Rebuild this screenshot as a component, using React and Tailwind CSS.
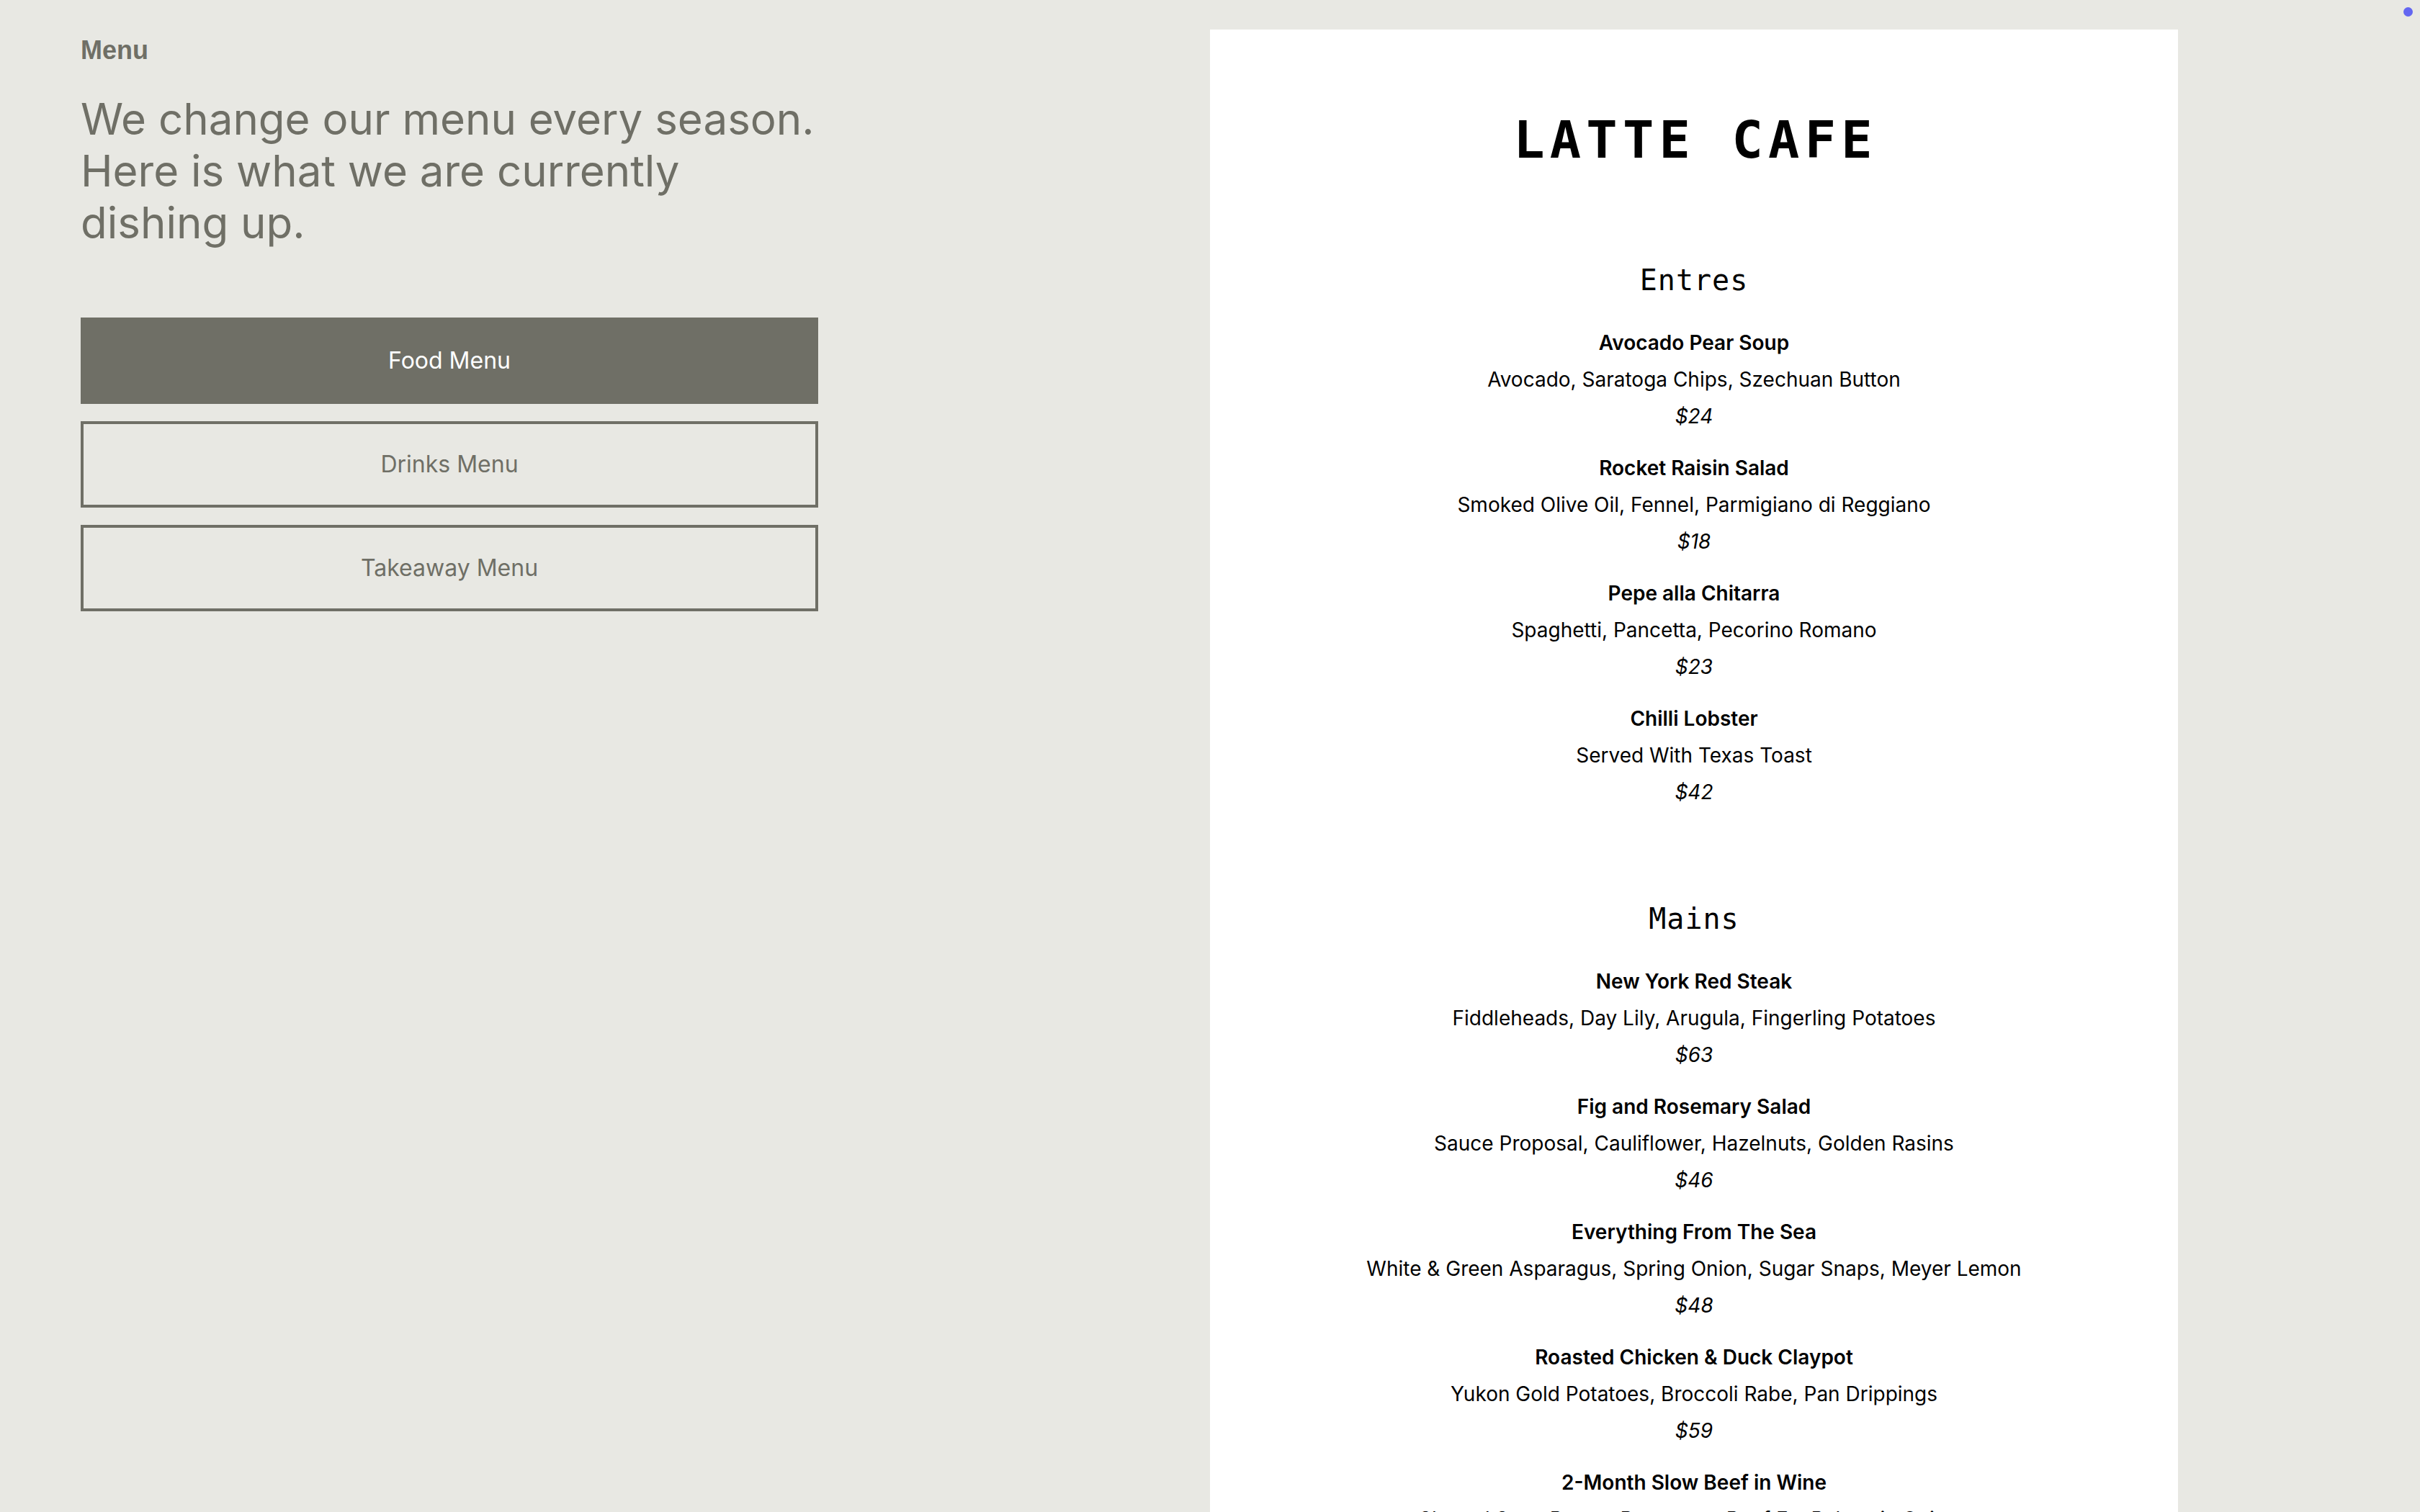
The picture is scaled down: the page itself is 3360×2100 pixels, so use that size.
import React from "react";

const sections = [
  {
    title: "Entres",
    items: [
      { name: "Avocado Pear Soup", desc: "Avocado, Saratoga Chips, Szechuan Button", price: "$24" },
      { name: "Rocket Raisin Salad", desc: "Smoked Olive Oil, Fennel, Parmigiano di Reggiano", price: "$18" },
      { name: "Pepe alla Chitarra", desc: "Spaghetti, Pancetta, Pecorino Romano", price: "$23" },
      { name: "Chilli Lobster", desc: "Served With Texas Toast", price: "$42" },
    ],
  },
  {
    title: "Mains",
    items: [
      { name: "New York Red Steak", desc: "Fiddleheads, Day Lily, Arugula, Fingerling Potatoes", price: "$63" },
      { name: "Fig and Rosemary Salad", desc: "Sauce Proposal, Cauliflower, Hazelnuts, Golden Rasins", price: "$46" },
      { name: "Everything From The Sea", desc: "White & Green Asparagus, Spring Onion, Sugar Snaps, Meyer Lemon", price: "$48" },
      { name: "Roasted Chicken & Duck Claypot", desc: "Yukon Gold Potatoes, Broccoli Rabe, Pan Drippings", price: "$59" },
      { name: "2-Month Slow Beef in Wine", desc: "Shaved Snap Beans, Rosemary, Beef Fat Balsamic Onions", price: "$52" },
    ],
  },
];

export default function App() {
  return (
    <div className="relative min-h-screen w-full bg-[#e8e8e3] font-['Inter',sans-serif]">
      <div className="absolute right-[10px] top-[10px] h-[13px] w-[13px] rounded-full bg-[#6366f1]" />
      <div className="grid grid-cols-2">
        {/* Left column */}
        <div className="pl-[112px] pt-[46px]">
          <div className="w-[1024px]">
            <h2 className="font-['Liberation_Sans',Arial,sans-serif] text-[36px] font-bold leading-[48px] text-[#6f6f66]">
              Menu
            </h2>
            <p className="mt-[35px] text-[60px] leading-[72px] text-[#6f6f66]">
              We change our menu every season.
              <br />
              Here is what we are currently
              <br />
              dishing up.
            </p>
            <div className="mt-[96px] flex flex-col gap-[24px]">
              <button className="flex h-[120px] w-full items-center justify-center bg-[#6f6f66] text-[32px] text-white">
                Food Menu
              </button>
              <button className="flex h-[120px] w-full items-center justify-center border-[4px] border-[#6f6f66] text-[32px] text-[#6f6f66]">
                Drinks Menu
              </button>
              <button className="flex h-[120px] w-full items-center justify-center border-[4px] border-[#6f6f66] text-[32px] text-[#6f6f66]">
                Takeaway Menu
              </button>
            </div>
          </div>
        </div>

        {/* Right column */}
        <div className="pt-[41px]">
          <div className="w-[1344px] bg-white pt-[113px] pb-[120px] text-center text-black">
            <h1 className="pl-[4px] font-['DejaVu_Sans_Mono',monospace] text-[72px] font-bold leading-[80px] tracking-[0.1em]">
              LATTE CAFE
            </h1>
            <div className="mt-[127px] flex flex-col gap-[122px]">
              {sections.map((s) => (
                <section key={s.title}>
                  <h3 className="font-['DejaVu_Sans_Mono',monospace] text-[40px] leading-[56px] tracking-[0.025em]">
                    {s.title}
                  </h3>
                  <div className="mt-[34px] flex flex-col gap-[21px]">
                    {s.items.map((it) => (
                      <div key={it.name} className="text-[28px] leading-[51px]">
                        <p className="font-semibold">{it.name}</p>
                        <p>{it.desc}</p>
                        <p className="italic">{it.price}</p>
                      </div>
                    ))}
                  </div>
                </section>
              ))}
            </div>
          </div>
        </div>
      </div>
    </div>
  );
}
